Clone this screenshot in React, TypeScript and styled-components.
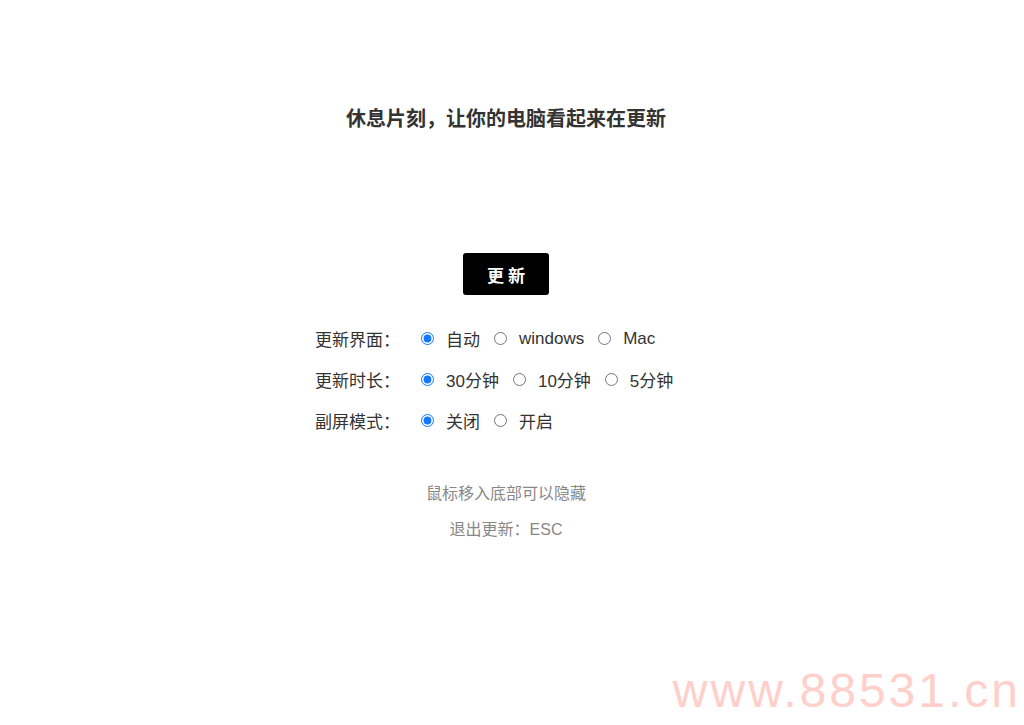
import React, { useState } from 'react';
import styled, { createGlobalStyle } from 'styled-components';

const GlobalStyle = createGlobalStyle`
    html, body {
        margin: 0;
        padding: 0;
        background: #fff;
    }
    body {
        font-family: "Liberation Sans", Arial, "Noto Sans CJK SC", sans-serif;
    }
`;

interface Option {
    value: string;
    label: string;
}

interface Setting {
    name: string;
    label: string;
    options: Option[];
}

const settings: Setting[] = [
    {
        name: 'screen',
        label: '更新界面：',
        options: [
            { value: 'auto', label: '自动' },
            { value: 'windows', label: 'windows' },
            { value: 'mac', label: 'Mac' },
        ],
    },
    {
        name: 'duration',
        label: '更新时长：',
        options: [
            { value: '30', label: '30分钟' },
            { value: '10', label: '10分钟' },
            { value: '5', label: '5分钟' },
        ],
    },
    {
        name: 'second',
        label: '副屏模式：',
        options: [
            { value: 'off', label: '关闭' },
            { value: 'on', label: '开启' },
        ],
    },
];

const App = () => {
    const [values, setValues] = useState<Record<string, string>>({
        screen: 'auto',
        duration: '30',
        second: 'off',
    });

    const handleChange = (name: string, value: string) => {
        setValues({ ...values, [name]: value });
    };

    return (
        <Page>
            <GlobalStyle />
            <Title>休息片刻，让你的电脑看起来在更新</Title>
            <UpdateButton>更新</UpdateButton>
            <Form>
                {settings.map((setting) => (
                    <FormRow key={setting.name}>
                        <RowLabel>{setting.label}</RowLabel>
                        {setting.options.map((option) => (
                            <RadioLabel key={option.value}>
                                <Radio
                                    type="radio"
                                    name={setting.name}
                                    checked={values[setting.name] === option.value}
                                    onChange={() => handleChange(setting.name, option.value)}
                                />
                                {option.label}
                            </RadioLabel>
                        ))}
                    </FormRow>
                ))}
            </Form>
            <Tips>
                <Tip>鼠标移入底部可以隐藏</Tip>
                <Tip>退出更新：ESC</Tip>
            </Tips>
            <Watermark>www.88531.cn</Watermark>
        </Page>
    );
};

export default App;

// Styled Components
const Page = styled.div`
    position: relative;
    height: 725px;
    padding-right: 12px;
    display: flex;
    flex-direction: column;
    align-items: center;
    overflow: hidden;
`;

const Title = styled.h1`
    margin: 106px 0 0;
    font-family: "Liberation Sans", "Noto Sans CJK SC", sans-serif;
    font-size: 20px;
    line-height: 26px;
    font-weight: bold;
    color: #333;
`;

const UpdateButton = styled.button`
    margin-top: 121px;
    width: 86px;
    height: 42px;
    padding: 0 0 0 4px;
    border: none;
    border-radius: 3px;
    background: #000;
    color: #fff;
    font-family: inherit;
    font-size: 17px;
    font-weight: bold;
    letter-spacing: 4px;
    cursor: pointer;
`;

const Form = styled.div`
    width: 382px;
    margin-top: 23px;
    display: flex;
    flex-direction: column;
`;

const FormRow = styled.div`
    display: flex;
    align-items: center;
    height: 41px;
    font-size: 17px;
    color: #333;
`;

const RowLabel = styled.span`
    width: 100px;
    flex-shrink: 0;
`;

const RadioLabel = styled.label`
    display: flex;
    align-items: center;
    margin-right: 8px;
    cursor: pointer;
`;

const Radio = styled.input`
    width: 13px;
    height: 13px;
    margin: 0 12px 0 6px;
    accent-color: #1677ff;
`;

const Tips = styled.div`
    margin-top: 35px;
    display: flex;
    flex-direction: column;
    align-items: center;
`;

const Tip = styled.p`
    margin: 0;
    font-size: 16px;
    line-height: 36px;
    color: #888;
`;

const Watermark = styled.div`
    position: absolute;
    right: 3px;
    bottom: 7px;
    font-family: "Liberation Sans", Arial, sans-serif;
    font-size: 48px;
    letter-spacing: 3px;
    color: #ffcfcb;
    pointer-events: none;
`;
